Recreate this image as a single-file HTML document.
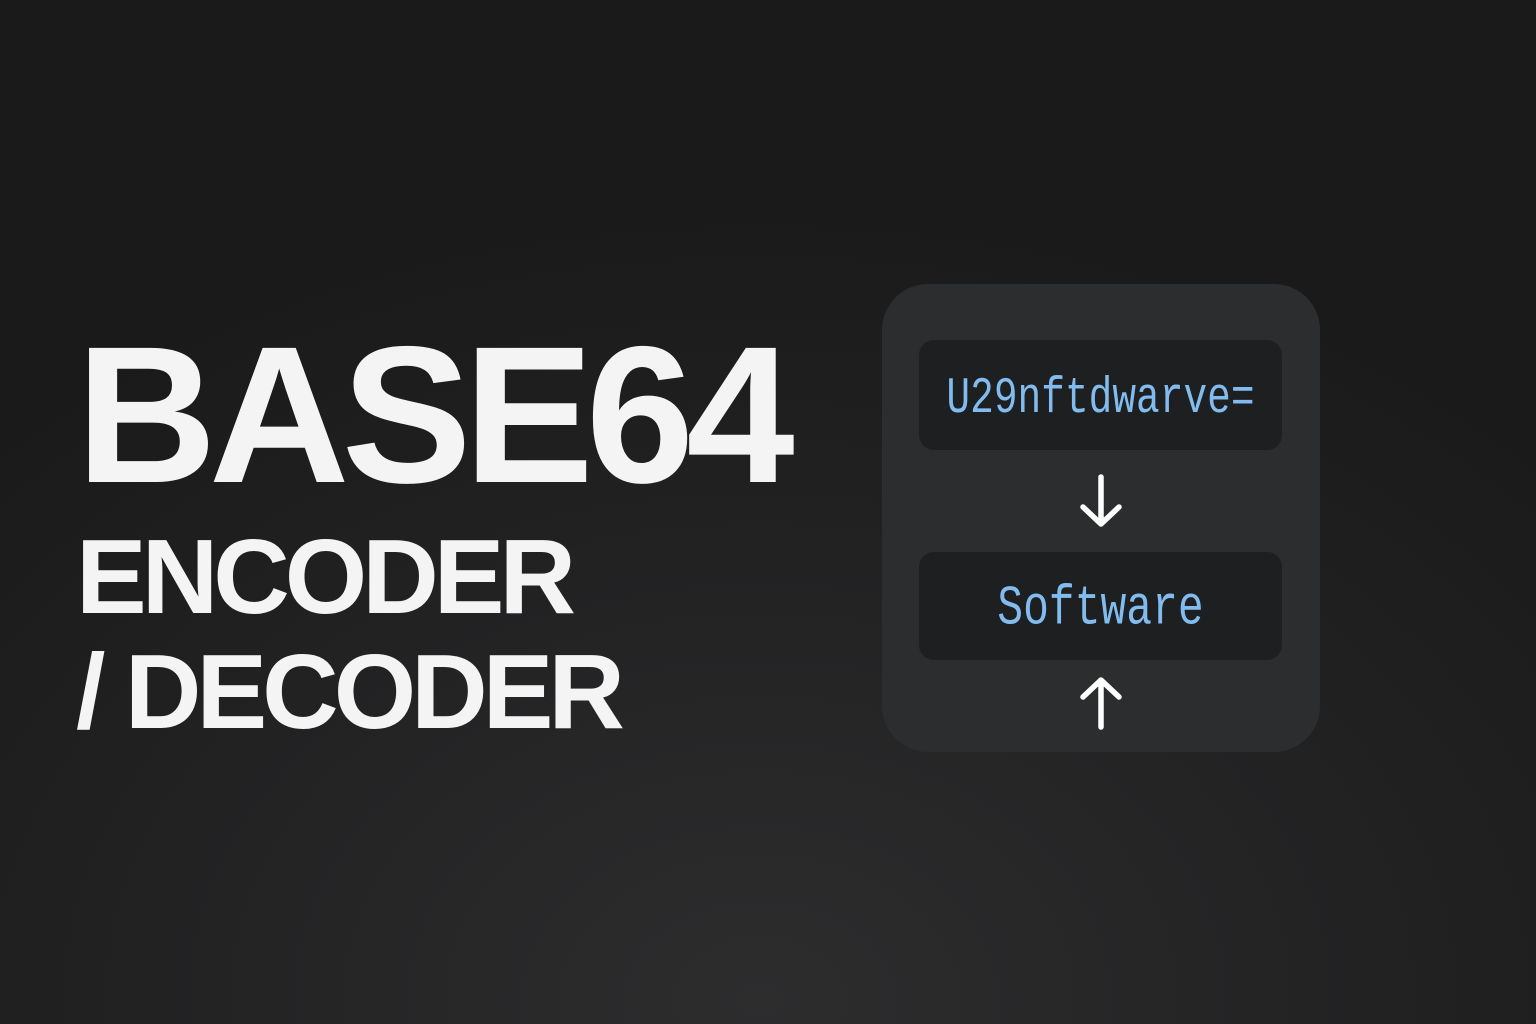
<!DOCTYPE html>
<html><head><style>
html,body{margin:0;padding:0}
body{width:1536px;height:1024px;overflow:hidden;position:relative;
background:radial-gradient(ellipse 1100px 800px at 760px 1000px,#2d2d2e 0%,#232324 50%,#1a1a1a 100%);
font-family:"Liberation Sans",sans-serif;color:#f4f4f4}
.t{position:absolute;left:76px;font-weight:bold;white-space:nowrap;line-height:1}
.card{position:absolute;left:882px;top:284px;width:438px;height:468px;border-radius:46px;background:#2c2d2f}
.box{position:absolute;left:37px;width:363px;border-radius:15px;background:#1e1f21;
font-family:"Liberation Mono",monospace;color:#82bcee;text-align:center;white-space:nowrap}
.box span{display:inline-block;transform:scaleY(1.3)}
</style></head><body>
<div class="t" style="top:318px;font-size:195px;letter-spacing:-8px">BASE64</div>
<div class="t" style="top:524px;font-size:106px;letter-spacing:-5px">ENCODER</div>
<div class="t" style="top:639px;font-size:106px;letter-spacing:-5px">/ DECODER</div>
<div class="card">
 <div class="box" style="top:56px;height:110px;line-height:118px;font-size:39.5px"><span>U29nftdwarve=</span></div>
 <svg style="position:absolute;left:196px;top:190px" width="46" height="56" viewBox="0 0 46 56"><path d="M23 3V50M5 33L23 50L41 33" fill="none" stroke="#fff" stroke-width="5.5" stroke-linecap="round" stroke-linejoin="round"/></svg>
 <div class="box" style="top:268px;height:108px;line-height:114px;font-size:43px"><span>Software</span></div>
 <svg style="position:absolute;left:196px;top:390px" width="46" height="56" viewBox="0 0 46 56"><path d="M23 53V6M5 23L23 6L41 23" fill="none" stroke="#fff" stroke-width="5.5" stroke-linecap="round" stroke-linejoin="round"/></svg>
</div>
</body></html>
